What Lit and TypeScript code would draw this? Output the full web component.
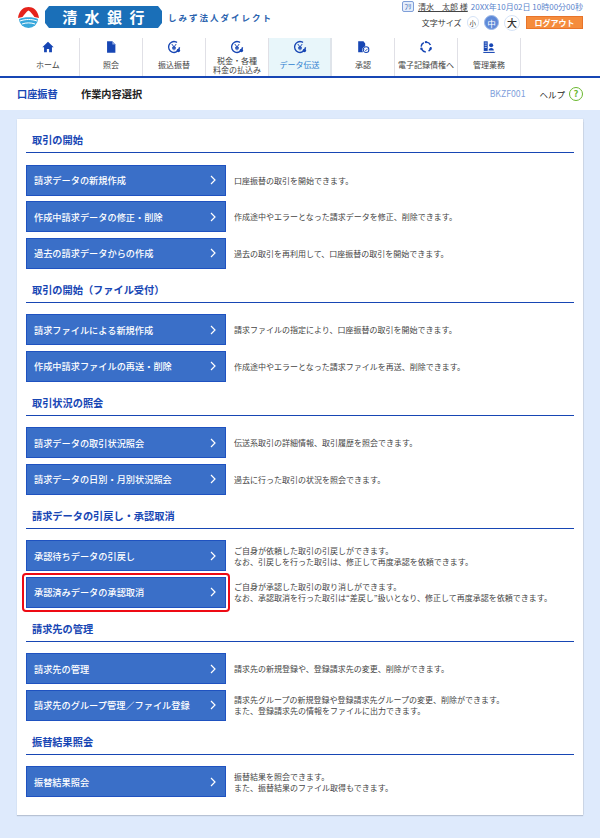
import { LitElement, html, css, svg } from "lit";
import { customElement } from "lit/decorators.js";

const BLUE = "#1746b4";

const yenIcon = svg`<circle cx="8" cy="8" r="6.2" fill="none" stroke="${BLUE}" stroke-width="1.6" stroke-dasharray="30 6" transform="rotate(20 8 8)"/>
<path d="M5.5 4.6 8 8l2.5-3.4M8 8v3.8M5.8 8.4h4.4M5.8 10h4.4" fill="none" stroke="${BLUE}" stroke-width="1.1"/>
<circle cx="13" cy="12" r="2" fill="${BLUE}"/>`;

const icons: Record<string, unknown> = {
  home: svg`<path d="M8 2 1.5 8.2h2V14h3.2v-3.6h2.6V14h3.2V8.2h2z" fill="${BLUE}"/>`,
  doc: svg`<path d="M3.5 1.5h6l3.5 3.5v9.5h-9.500z" fill="${BLUE}"/><path d="M9.500 1.500v3.500h3.500" fill="#8fa9e0"/>`,
  yen: yenIcon,
  approve: svg`<path d="M2.500 1.500h6l2 2.500v3a4.500 4.500 0 0 0-2.500 7h-5.500z" fill="${BLUE}"/><circle cx="11.500" cy="11" r="3.200" fill="#fff" stroke="${BLUE}" stroke-width="1.200"/><path d="m10 11 1.200 1.200 2-2.200" fill="none" stroke="${BLUE}" stroke-width="1"/>`,
  circle: svg`<circle cx="8" cy="8" r="5.600" fill="none" stroke="${BLUE}" stroke-width="1.700" stroke-dasharray="5.500 3.300"/><circle cx="8" cy="2.400" r="1.400" fill="${BLUE}"/><circle cx="2.800" cy="10" r="1.400" fill="${BLUE}"/><circle cx="13.200" cy="10" r="1.400" fill="${BLUE}"/>`,
  admin: svg`<path d="M2 1.500h4.500v11H2z" fill="${BLUE}"/><path d="M3 3.500h2.500M3 6h2.500M3 8.500h2.500" stroke="#fff" stroke-width=".8"/><circle cx="10.500" cy="6" r="2.300" fill="${BLUE}"/><path d="M7.500 12a3 3 0 0 1 6 0z" fill="${BLUE}"/><path d="M1.500 14.200h13" stroke="${BLUE}" stroke-width="1.200"/>`,
};

const tabs = [
  { icon: "home", label: ["ホーム"] },
  { icon: "doc", label: ["照会"] },
  { icon: "yen", label: ["振込振替"] },
  { icon: "yen", label: ["税金・各種", "料金の払込み"] },
  { icon: "yen", label: ["データ伝送"], active: true },
  { icon: "approve", label: ["承認"] },
  { icon: "circle", label: ["電子記録債権へ"] },
  { icon: "admin", label: ["管理業務"] },
];

const sections = [
  {
    title: "取引の開始",
    rows: [
      { b: "請求データの新規作成", d: ["口座振替の取引を開始できます。"] },
      { b: "作成中請求データの修正・削除", d: ["作成途中やエラーとなった請求データを修正、削除できます。"] },
      { b: "過去の請求データからの作成", d: ["過去の取引を再利用して、口座振替の取引を開始できます。"] },
    ],
  },
  {
    title: "取引の開始（ファイル受付）",
    rows: [
      { b: "請求ファイルによる新規作成", d: ["請求ファイルの指定により、口座振替の取引を開始できます。"] },
      { b: "作成中請求ファイルの再送・削除", d: ["作成途中やエラーとなった請求ファイルを再送、削除できます。"] },
    ],
  },
  {
    title: "取引状況の照会",
    rows: [
      { b: "請求データの取引状況照会", d: ["伝送系取引の詳細情報、取引履歴を照会できます。"] },
      { b: "請求データの日別・月別状況照会", d: ["過去に行った取引の状況を照会できます。"] },
    ],
  },
  {
    title: "請求データの引戻し・承認取消",
    rows: [
      { b: "承認待ちデータの引戻し", d: ["ご自身が依頼した取引の引戻しができます。", "なお、引戻しを行った取引は、修正して再度承認を依頼できます。"] },
      { b: "承認済みデータの承認取消", hl: true, d: ["ご自身が承認した取引の取り消しができます。", "なお、承認取消を行った取引は“差戻し”扱いとなり、修正して再度承認を依頼できます。"] },
    ],
  },
  {
    title: "請求先の管理",
    rows: [
      { b: "請求先の管理", d: ["請求先の新規登録や、登録請求先の変更、削除ができます。"] },
      { b: "請求先のグループ管理／ファイル登録", d: ["請求先グループの新規登録や登録請求先グループの変更、削除ができます。", "また、登録請求先の情報をファイルに出力できます。"] },
    ],
  },
  {
    title: "振替結果照会",
    rows: [{ b: "振替結果照会", d: ["振替結果を照会できます。", "また、振替結果のファイル取得もできます。"] }],
  },
];

@customElement("app-root")
export class AppRoot extends LitElement {
  static styles = css`
    :host {
      display: block;
      width: 600px;
      height: 838px;
      overflow: hidden;
      background: #deeafc;
      font-family: "Noto Sans CJK JP", "Noto Sans", sans-serif;
      color: #333;
    }
    .header {
      background: #fff;
      height: 76px;
      display: flex;
      flex-direction: column;
      padding: 0 17px;
      border-bottom: 2.500px solid #1746b4;
    }
    .top {
      height: 38px;
      display: flex;
      justify-content: space-between;
    }
    .brand {
      display: flex;
      align-items: flex-start;
      padding: 6px 0 0 1px;
    }
    .logo {
      width: 21px;
      height: 22px;
      margin-right: 6px;
      display: block;
    }
    .banner {
      width: 117px;
      height: 22px;
      background: #1a6fb8;
      clip-path: polygon(4px 0, 113px 0, 117px 5px, 117px 17px, 113px 22px, 4px 22px, 0 17px, 0 5px);
      color: #fff;
      font-size: 15px;
      font-weight: 700;
      line-height: 22px;
      letter-spacing: 7.400px;
      text-align: center;
      padding-left: 7px;
      box-sizing: border-box;
      white-space: nowrap;
      overflow: hidden;
    }
    .direct {
      margin: 2px 0 0 6px;
      font-size: 8.500px;
      font-weight: 700;
      letter-spacing: 2px;
      color: #2a62ae;
      line-height: 18px;
      white-space: nowrap;
    }
    .user {
      display: flex;
      flex-direction: column;
      align-items: flex-end;
      padding-top: 0;
    }
    .line1 {
      display: flex;
      align-items: center;
      height: 13px;
      font-size: 8px;
      white-space: nowrap;
    }
    .kana {
      width: 12px;
      height: 11px;
      box-sizing: border-box;
      border: 1px solid #7f9fd8;
      border-radius: 2px;
      background: #e4edfb;
      color: #2a55a8;
      font-size: 7px;
      line-height: 9px;
      text-align: center;
      margin-right: 4px;
    }
    .name {
      color: #444;
      text-decoration: underline;
      margin-right: 3px;
      font-size: 8px;
    }
    .date {
      color: #5a84cc;
    }
    .line2 {
      display: flex;
      align-items: center;
      margin-top: 2px;
      height: 15px;
      font-size: 8px;
      color: #333;
    }
    .fs-label {
      margin-right: 5px;
    }
    .fs {
      border-radius: 50%;
      border: 1.500px solid #d5e3f7;
      background: #fff;
      box-sizing: border-box;
      width: 12.500px;
      height: 12.500px;
      display: flex;
      align-items: center;
      justify-content: center;
      font-size: 6.500px;
      margin-right: 5px;
    }
    .fs.m {
      width: 15px;
      height: 15px;
      background: #5f8ad8;
      color: #fff;
      border-color: #9db9e8;
      font-size: 8.500px;
    }
    .fs.l {
      width: 16px;
      height: 16px;
      font-size: 10px;
      font-weight: 500;
      margin-right: 6px;
    }
    .logout {
      width: 57px;
      height: 13px;
      background: #f58c3c;
      border: 1px solid #e8742a;
      box-sizing: border-box;
      color: #fff;
      font-size: 8px;
      font-weight: 700;
      text-align: center;
      line-height: 11px;
    }
    .tabs {
      display: flex;
      height: 38px;
    }
    .tab {
      width: 63px;
      box-sizing: border-box;
      border-right: 1px solid #e0e0e6;
      display: flex;
      flex-direction: column;
      align-items: center;
      padding-top: 2px;
      font-size: 8px;
      line-height: 9.500px;
      color: #444;
      white-space: nowrap;
    }
    .tab.active {
      background: #e8f6fa;
      color: #2f7fd0;
      border-right: 2px solid #dfe4ea;
    }
    .tab svg {
      width: 14px;
      height: 14px;
      display: block;
    }
    .tab .lbl {
      flex: 1;
      display: flex;
      flex-direction: column;
      align-items: center;
      justify-content: center;
    }
    .crumb {
      background: #fff;
      height: 31.500px;
      padding: 0 17px;
      display: flex;
      align-items: center;
      font-size: 10.200px;
      font-weight: 700;
    }
    .crumb .c1 {
      color: #1746b4;
      width: 64px;
    }
    .crumb .c2 {
      color: #222;
      flex: 1;
    }
    .code {
      color: #7f9fdc;
      font-size: 8.700px;
      font-weight: 400;
      margin-right: 14px;
    }
    .help {
      color: #222;
      font-size: 8.500px;
      font-weight: 400;
      margin-right: 4px;
    }
    .q {
      width: 14px;
      height: 14px;
      box-sizing: border-box;
      border: 1.500px solid #6ab82e;
      border-radius: 50%;
      color: #6ab82e;
      font-size: 9.500px;
      font-weight: 700;
      line-height: 11px;
      text-align: center;
    }
    .card {
      margin: 9px 17px 0;
      height: 696px;
      box-sizing: border-box;
      background: #fff;
      box-shadow: 0 1px 1px #b7c2d4, -0.500px 0 1px #d0d9e8, 0.500px 0 1px #d0d9e8;
      padding: 8.500px 9px 0;
      display: flex;
      flex-direction: column;
      gap: 8px;
    }
    h2 {
      margin: 0 0 11.500px;
      height: 26px;
      box-sizing: border-box;
      border-bottom: 1.500px solid #1746b4;
      padding-left: 6px;
      font-size: 10.200px;
      font-weight: 700;
      line-height: 26px;
      color: #1746b4;
    }
    .rows {
      display: flex;
      flex-direction: column;
      gap: 5.500px;
    }
    .row {
      display: flex;
      align-items: center;
      height: 31px;
    }
    .btn {
      position: relative;
      flex: none;
      width: 199.500px;
      height: 31px;
      box-sizing: border-box;
      background: #3a6fc8;
      border: 1px solid #1f52c0;
      color: #fff;
      font-size: 9.200px;
      font-weight: 500;
      padding: 0 7px;
      display: flex;
      align-items: center;
      justify-content: space-between;
      white-space: nowrap;
    }
    .btn svg {
      width: 6px;
      height: 10px;
      display: block;
      margin-right: 2px;
    }
    .btn.hl::after {
      content: "";
      position: absolute;
      inset: -4.500px -5px -5px;
      border: 2.500px solid #ee0a14;
      border-radius: 4px;
    }
    .desc {
      margin-left: 8.500px;
      font-size: 8px;
      line-height: 11px;
      color: #444;
      white-space: nowrap;
    }
  `;

  render() {
    return html`
      <div class="header">
        <div class="top">
          <div class="brand">
            <svg class="logo" viewBox="0 0 21 22">
              <path d="M0 12C1 4 6 1 10.500 1S20 4 21 12l-4.500-1C14.500 8.500 12.500 5.500 10.500 4.500 8.500 5.500 6.500 8.500 4.500 11z" fill="#e5231b"/>
              <path d="M1 13c5-2.500 14-2.500 19 0a9.500 9 0 0 1-19 0z" fill="#38a8dc"/>
              <path d="M2 15c5-2 12-2 17 0M4 18c4-1.500 9-1.500 13 0" stroke="#fff" stroke-width="1" fill="none"/>
            </svg>
            <div class="banner">清水銀行</div>
            <div class="direct">しみず法人ダイレクト</div>
          </div>
          <div class="user">
            <div class="line1">
              <span class="kana">ﾌﾘ</span><span class="name">清水　太郎 様</span>
              <span class="date">20XX年10月02日 10時00分00秒</span>
            </div>
            <div class="line2">
              <span class="fs-label">文字サイズ</span>
              <span class="fs">小</span><span class="fs m">中</span><span class="fs l">大</span>
              <span class="logout">ログアウト</span>
            </div>
          </div>
        </div>
        <div class="tabs">
          ${tabs.map(
            (t) => html`<div class="tab ${t.active ? "active" : ""}">
              <svg viewBox="0 0 16 16">${icons[t.icon]}</svg>
              <div class="lbl">${t.label.map((l) => html`<span>${l}</span>`)}</div>
            </div>`
          )}
        </div>
      </div>
      <div class="crumb">
        <span class="c1">口座振替</span><span class="c2">作業内容選択</span>
        <span class="code">BKZF001</span><span class="help">ヘルプ</span><span class="q">?</span>
      </div>
      <div class="card">
        ${sections.map(
          (s) => html`<section>
            <h2>${s.title}</h2>
            <div class="rows">
              ${s.rows.map(
                (r: any) => html`<div class="row">
                  <div class="btn ${r.hl ? "hl" : ""}">
                    <span>${r.b}</span>
                    <svg viewBox="0 0 6 10"><path d="m1 1 4 4-4 4" fill="none" stroke="#fff" stroke-width="1.200"/></svg>
                  </div>
                  <div class="desc">${r.d.map((l: string) => html`<div>${l}</div>`)}</div>
                </div>`
              )}
            </div>
          </section>`
        )}
      </div>
    `;
  }
}
